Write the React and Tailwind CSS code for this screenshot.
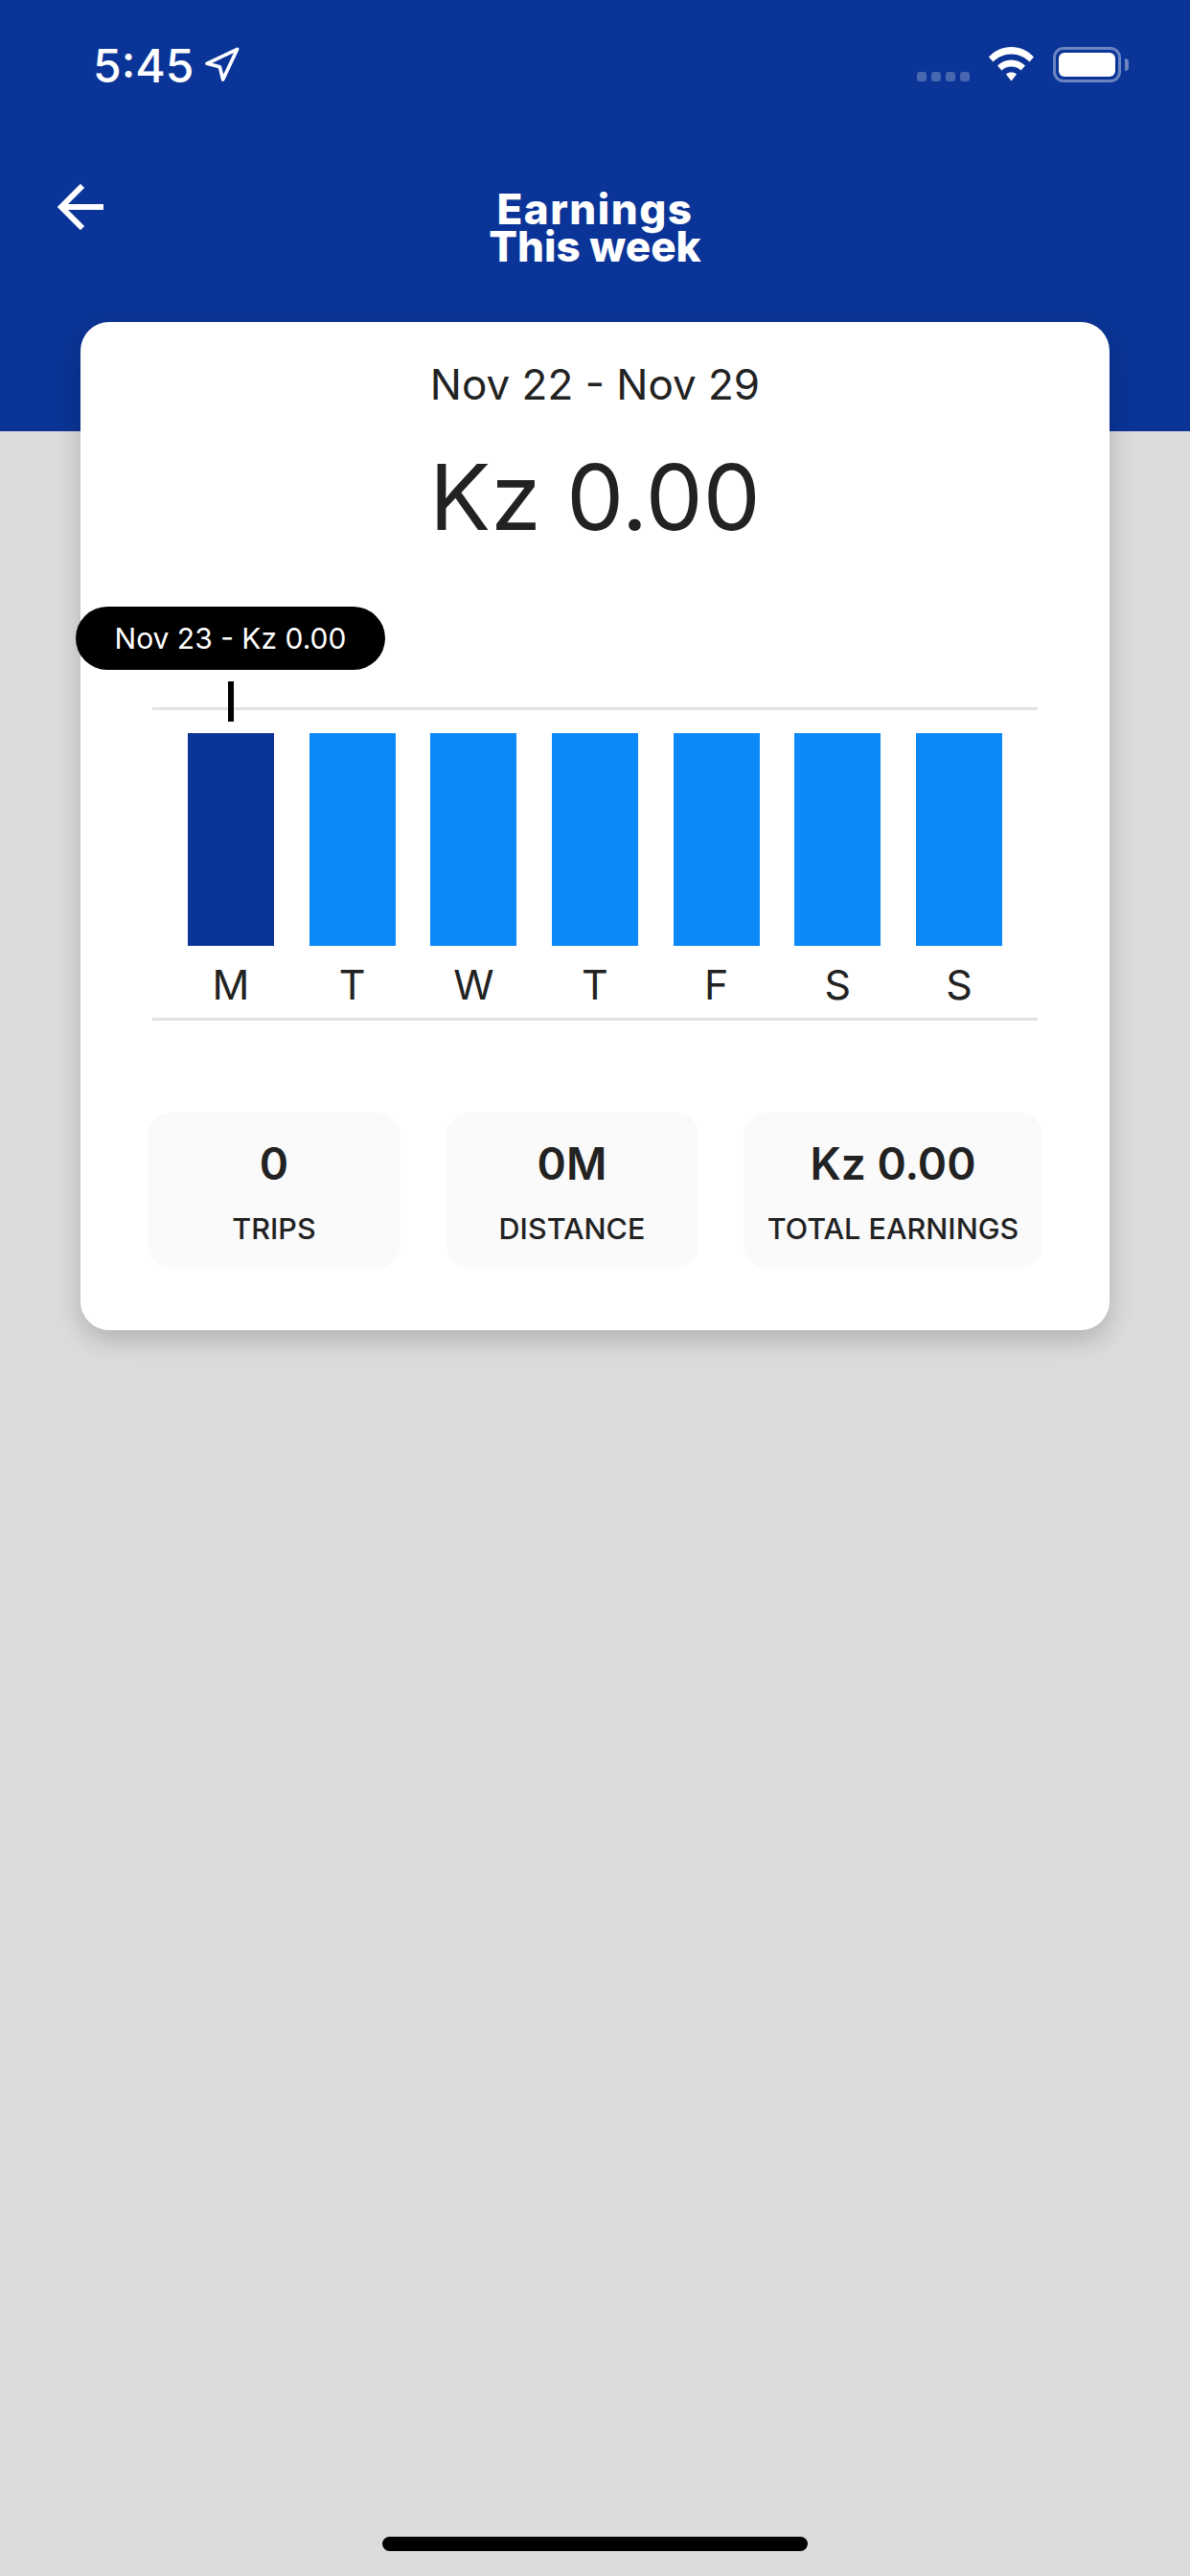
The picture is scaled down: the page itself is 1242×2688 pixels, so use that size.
import { Navigation } from 'lucide-react'

const days = ['M', 'T', 'W', 'T', 'F', 'S', 'S']

const stats = [
  { value: '0', label: 'TRIPS', width: 'w-[264px]' },
  { value: '0M', label: 'DISTANCE', width: 'w-[263px]' },
  { value: 'Kz 0.00', label: 'TOTAL EARNINGS', width: 'w-[312px]' },
]

function WifiIcon() {
  return (
    <svg width="47" height="36" viewBox="0 0 47 36" fill="white">
      <path d="M0 10.5C6 4 14.5 0 23.5 0S41 4 47 10.5L42.5 15.5C37.5 10.5 31 7.5 23.5 7.5S9.5 10.5 4.5 15.5Z" />
      <path d="M9 19.5C13 15.5 18 13.5 23.5 13.5S34 15.5 38 19.5L33.5 24.5C31 22 27.5 20.5 23.5 20.5S16 22 13.5 24.5Z" />
      <path d="M18 28.5C19.5 27 21.5 26.5 23.5 26.5S27.5 27 29 28.5L23.5 35.5Z" />
    </svg>
  )
}

function StatusBar() {
  return (
    <div className="flex justify-between items-start pt-[49px] pl-[97px] pr-[64px] h-[170px]">
      <div className="flex items-center gap-[13px]">
        <span className="text-[48px] leading-[40px] font-medium text-white font-['Inter',sans-serif]">5:45</span>
        <Navigation size={40} strokeWidth={2.2} className="text-white -ml-[4px] -mt-[3px]" />
      </div>
      <div className="flex items-start">
        <div className="flex gap-[5px] mt-[26px] mr-[20px]">
          {[0, 1, 2, 3].map((i) => (
            <div key={i} className="w-[10px] h-[10px] rounded-[3px] bg-white/25" />
          ))}
        </div>
        <WifiIcon />
        <div className="flex items-center ml-[20px]">
          <div className="w-[71px] h-[37px] rounded-[11px] border-[3px] border-white/40 p-[3px]">
            <div className="w-full h-full rounded-[6px] bg-white" />
          </div>
          <div className="w-[4px] h-[13px] ml-[4px] rounded-r-[4px] bg-white/40" />
        </div>
      </div>
    </div>
  )
}

function Chart() {
  return (
    <div className="relative mx-[75px] mt-[58px]">
      {/* tooltip for the selected bar */}
      <div className="absolute -left-[80px] -top-[105px] w-[323px] h-[66px] rounded-full bg-black flex items-center justify-center text-[30px] text-white font-['Inter',sans-serif]">
        Nov 23 - Kz 0.00
      </div>
      <div className="absolute left-[79px] -top-[27px] w-[6px] h-[42px] bg-black" />

      <div className="border-y-[3px] border-[#e2e2e2] h-[327px] pt-[24px] px-[37px] flex justify-between">
        {days.map((d, i) => (
          <div key={i} className="w-[90px] flex flex-col items-center">
            <div className={i === 0 ? 'w-full h-[222px] bg-[#0a3497]' : 'w-full h-[222px] bg-[#0c89f9]'} />
            <span className="mt-[19px] text-[43px] leading-[42px] text-[#222] font-['Inter',sans-serif]">{d}</span>
          </div>
        ))}
      </div>
    </div>
  )
}

export default function App() {
  return (
    <div className="min-h-[2688px] flex flex-col bg-[#dcdcdc] font-['Inter',sans-serif]">
      <div className="h-[450px] bg-[#0a3497]">
        <StatusBar />
        <div className="relative h-[110px]">
          <svg className="absolute left-[60px] top-[22px]" width="48" height="48" viewBox="0 0 48 48" fill="none" stroke="white" strokeWidth="6">
            <path d="M26 2L4 24L26 46M4 24H48" />
          </svg>
          <div className="pt-[29px] text-center text-white text-[44px] leading-[39px] font-extrabold">
            <div className="tracking-[1.5px]">Earnings</div>
            <div>This week</div>
          </div>
        </div>
      </div>

      <div className="relative mx-[84px] -mt-[114px] h-[1052px] rounded-[30px] bg-white shadow-[0_10px_28px_rgba(0,0,0,0.2)]">
        <div className="pt-[38px] text-center text-[44px] leading-[54px] text-[#222]">Nov 22 - Nov 29</div>
        <div className="mt-[33px] text-center text-[95px] leading-[115px] text-[#222]">Kz 0.00</div>
        <div className="h-[104px]" />
        <Chart />
        <div className="flex justify-between mx-[70px] mt-[96px]">
          {stats.map((s) => (
            <div key={s.label} className={`${s.width} h-[162px] rounded-[24px] bg-[#fafafa] flex flex-col items-center pt-[23px]`}>
              <div className="text-[46px] leading-[60px] font-semibold text-[#222]">{s.value}</div>
              <div className="mt-[20px] text-[30.5px] leading-[36px] font-medium text-[#222] whitespace-nowrap">{s.label}</div>
            </div>
          ))}
        </div>
      </div>

      <div className="mt-auto pb-[26px] flex justify-center">
        <div className="w-[444px] h-[15px] rounded-full bg-black" />
      </div>
    </div>
  )
}
